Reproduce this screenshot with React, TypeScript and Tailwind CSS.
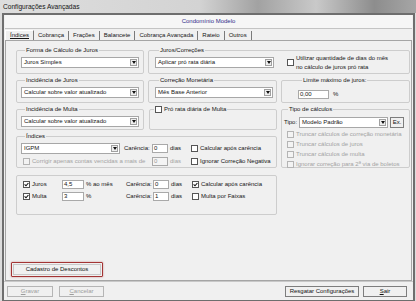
import type { ReactNode } from "react";

type Tab = { label: string; active?: boolean };

const TABS: Tab[] = [
  { label: "Índices", active: true },
  { label: "Cobrança" },
  { label: "Frações" },
  { label: "Balancete" },
  { label: "Cobrança Avançada" },
  { label: "Rateio" },
  { label: "Outros" },
];

const TRUNCAR_OPTIONS = [
  "Truncar cálculos de correção monetária",
  "Truncar cálculos de juros",
  "Truncar cálculos de multa",
  "Ignorar correção para 2ª via de boletos",
];

function Group({
  title,
  className,
  children,
}: {
  title?: ReactNode;
  className?: string;
  children: ReactNode;
}) {
  return (
    <fieldset
      className={`min-w-0 rounded-[2px] border border-[#cdcdcd] ${className ?? ""}`}
    >
      {title ? (
        <legend className="ml-[4px] px-[1px] leading-[7px]">{title}</legend>
      ) : null}
      {children}
    </fieldset>
  );
}

function Select({ value, className }: { value: string; className?: string }) {
  return (
    <div
      className={`flex h-[11px] shrink-0 items-center border border-[#a7a7a7] bg-white ${className ?? ""}`}
    >
      <span className="flex-1 truncate pl-[2px]">{value}</span>
      <span className="mr-[1px] flex h-[7px] w-[7px] items-center justify-center border border-[#a0a0a0] bg-[#eeeeee]">
        <svg width="4" height="3" viewBox="0 0 4 3" aria-hidden>
          <path d="M0 0h4L2 3z" fill="#111" />
        </svg>
      </span>
    </div>
  );
}

function Check({
  checked,
  disabled,
}: {
  checked?: boolean;
  disabled?: boolean;
}) {
  return (
    <span
      className={`flex h-[7px] w-[7px] shrink-0 items-center justify-center border ${
        disabled ? "border-[#b4b4b4] bg-[#f3f3f3]" : "border-[#555] bg-white"
      }`}
    >
      {checked ? (
        <svg width="5" height="5" viewBox="0 0 5 5" aria-hidden>
          <path d="M0.6 2.4 2 3.8 4.4 1" fill="none" stroke="#111" strokeWidth="1.1" />
        </svg>
      ) : null}
    </span>
  );
}

function Input({
  value,
  className,
  disabled,
}: {
  value: string;
  className?: string;
  disabled?: boolean;
}) {
  return (
    <span
      className={`flex h-[9px] shrink-0 items-center border border-[#a9a9a9] pl-[1px] ${
        disabled ? "bg-[#f4f4f4] text-[#9a9a9a]" : "bg-white"
      } ${className ?? ""}`}
    >
      {value}
    </span>
  );
}

function Button({
  children,
  disabled,
  className,
}: {
  children: ReactNode;
  disabled?: boolean;
  className?: string;
}) {
  return (
    <button
      type="button"
      className={`flex h-[11px] items-center justify-center border bg-[#f0f0f0] ${
        disabled ? "border-[#b5b5b5] text-[#9d9d9d]" : "border-[#7d7d7d] text-[#111]"
      } ${className ?? ""}`}
    >
      {children}
    </button>
  );
}

export default function App() {
  return (
    <div className="flex h-[301px] w-[416px] flex-col overflow-hidden bg-[#dcdcdc] font-['Liberation_Sans',Arial,sans-serif] text-[6px] leading-[7px] text-[#151515]">
      <div className="flex h-[13px] shrink-0 items-center bg-[linear-gradient(90deg,#dedede_0%,#d3d3d3_48%,#a2a2a2_62%,#c9c9c9_76%,#8d8d8d_90%,#a6a6a6_100%)] pl-[3px] text-[6.6px]">
        Configurações Avançadas
      </div>

      <div className="ml-[2px] mr-[1px] flex flex-1 flex-col border-x-[2px] border-b border-t-[2px] border-[#6e6e6e] bg-[#f0f0f0]">
        <div className="mx-[1px] flex h-[14px] shrink-0 items-center justify-center border-b border-[#c4c4c4] bg-[#f6f6f6] text-[#2e2e8a]">
          Condomínio Modelo
        </div>

        <div className="ml-[1px] flex h-[11px] shrink-0 items-end">
          {TABS.map((tab) => (
            <span
              key={tab.label}
              className={`flex h-[9px] items-center border-r border-[#7a7a7a] px-[4px] ${
                tab.active ? "h-[10px] border-l border-t border-l-white border-t-white underline" : ""
              }`}
            >
              {tab.label}
            </span>
          ))}
        </div>

        <div className="ml-[1px] mr-[1px] flex flex-1 flex-col border border-[#a5a5a5] pb-[3px] pl-[10px] pt-[6px]">
          <div className="grid grid-cols-[128px_129px_129px] grid-rows-[26.5px_26.5px_24px_35px_44px] gap-x-[4px] gap-y-[3px]">
            <Group title="Forma de Cálculo de Juros" className="px-[4px] pt-[3px]">
              <Select value="Juros Simples" />
            </Group>

            <Group title="Juros/Correções" className="col-span-2 flex items-start pl-[6px] pt-[3px]">
              <Select value="Aplicar pró rata diária" className="w-[119px]" />
              <span className="ml-[13px] mt-[2px] flex items-center gap-[2px]">
                <Check />
              </span>
              <span className="-mt-[3px] ml-[2px] leading-[8.5px]">
                Utilizar quantidade de dias do mês
                <br />
                no cálculo de juros pró rata
              </span>
            </Group>

            <Group title="Incidência de Juros" className="px-[4px] pt-[3px]">
              <Select value="Calcular sobre valor atualizado" />
            </Group>

            <Group title="Correção Monetária" className="pl-[6px] pr-[3px] pt-[3px]">
              <Select value="Mês Base Anterior" />
            </Group>

            <Group title="Limite máximo de juros:" className="flex items-center pl-[16px] pt-[4px]">
              <Input value="0,00" className="w-[31px]" />
              <span className="ml-[4px]">%</span>
            </Group>

            <Group title="Incidência de Multa" className="px-[4px] pt-[3px]">
              <Select value="Calcular sobre valor atualizado" />
            </Group>

            <Group
              title={
                <span className="flex items-center gap-[2px]">
                  <Check />
                  Pró rata diária de Multa
                </span>
              }
              className="ml-[1px]"
            >
              <span />
            </Group>

            <Group title="Tipo de cálculos" className="row-span-2 pl-[2px] pr-[5px] pt-[4px]">
              <div className="flex items-center">
                <span className="w-[15px]">Tipo:</span>
                <Select value="Modelo Padrão" className="w-[89px]" />
                <Button className="ml-[2px] h-[10px] w-[14px]">Ex.</Button>
              </div>
              <div className="mt-[3px] flex flex-col gap-[3px] pl-[3px] text-[#a3a3a3]">
                {TRUNCAR_OPTIONS.map((option) => (
                  <span key={option} className="flex items-center gap-[2px]">
                    <Check disabled />
                    {option}
                  </span>
                ))}
              </div>
            </Group>

            <Group title="Índices" className="col-span-2 pl-[4px] pt-[3px]">
              <div className="flex items-center">
                <Select value="IGPM" className="w-[99px]" />
                <span className="ml-[4px] w-[28px]">Carência:</span>
                <Input value="0" className="w-[16px]" />
                <span className="ml-[2px] w-[21px]">dias</span>
                <span className="flex items-center gap-[2px]">
                  <Check />
                  Calcular após carência
                </span>
              </div>
              <div className="mt-[3px] flex items-center text-[#a3a3a3]">
                <span className="ml-[2px] flex w-[129px] items-center gap-[2px]">
                  <Check disabled />
                  Corrigir apenas contas vencidas a mais de
                </span>
                <Input value="0" className="w-[16px]" disabled />
                <span className="ml-[2px] w-[21px]">dias</span>
                <span className="flex items-center gap-[2px] text-[#151515]">
                  <Check />
                  Ignorar Correção Negativa
                </span>
              </div>
            </Group>

            <Group className="col-span-2 mt-[4px] flex flex-col gap-[3px] pl-[6px] pt-[4px]">
              <div className="flex items-center">
                <span className="flex w-[39px] items-center gap-[2px]">
                  <Check checked />
                  Juros
                </span>
                <Input value="4,5" className="w-[22px]" />
                <span className="ml-[2px] w-[40px]">% ao mês</span>
                <span className="w-[27px]">Carência:</span>
                <Input value="0" className="w-[16px]" />
                <span className="ml-[2px] w-[21px]">dias</span>
                <span className="flex items-center gap-[2px]">
                  <Check checked />
                  Calcular após carência
                </span>
              </div>
              <div className="flex items-center">
                <span className="flex w-[39px] items-center gap-[2px]">
                  <Check checked />
                  Multa
                </span>
                <Input value="3" className="w-[22px]" />
                <span className="ml-[2px] w-[40px]">%</span>
                <span className="w-[27px]">Carência:</span>
                <Input value="1" className="w-[16px]" />
                <span className="ml-[2px] w-[21px]">dias</span>
                <span className="flex items-center gap-[2px]">
                  <Check />
                  Multa por Faixas
                </span>
              </div>
            </Group>
          </div>

          <div className="mt-auto self-start rounded-[1px] border-[1.5px] border-[#a33434] p-[1px] shadow-[0_0_2px_rgba(160,40,40,0.5)] -ml-[5px]">
            <Button className="w-[88px] border-[#c8c8c8]">Cadastro de Descontos</Button>
          </div>
        </div>

        <div className="flex h-[19px] shrink-0 items-center border-t border-[#c8c8c8] px-[3px]">
          <Button disabled className="w-[46px]">
            <span className="underline">G</span>ravar
          </Button>
          <Button disabled className="ml-[6px] w-[45px]">
            <span className="underline">C</span>ancelar
          </Button>
          <Button className="ml-auto w-[74px]">Resgatar Configurações</Button>
          <Button className="ml-[4px] mr-[3px] w-[44px]">
            <span className="underline">S</span>air
          </Button>
        </div>
      </div>
    </div>
  );
}
